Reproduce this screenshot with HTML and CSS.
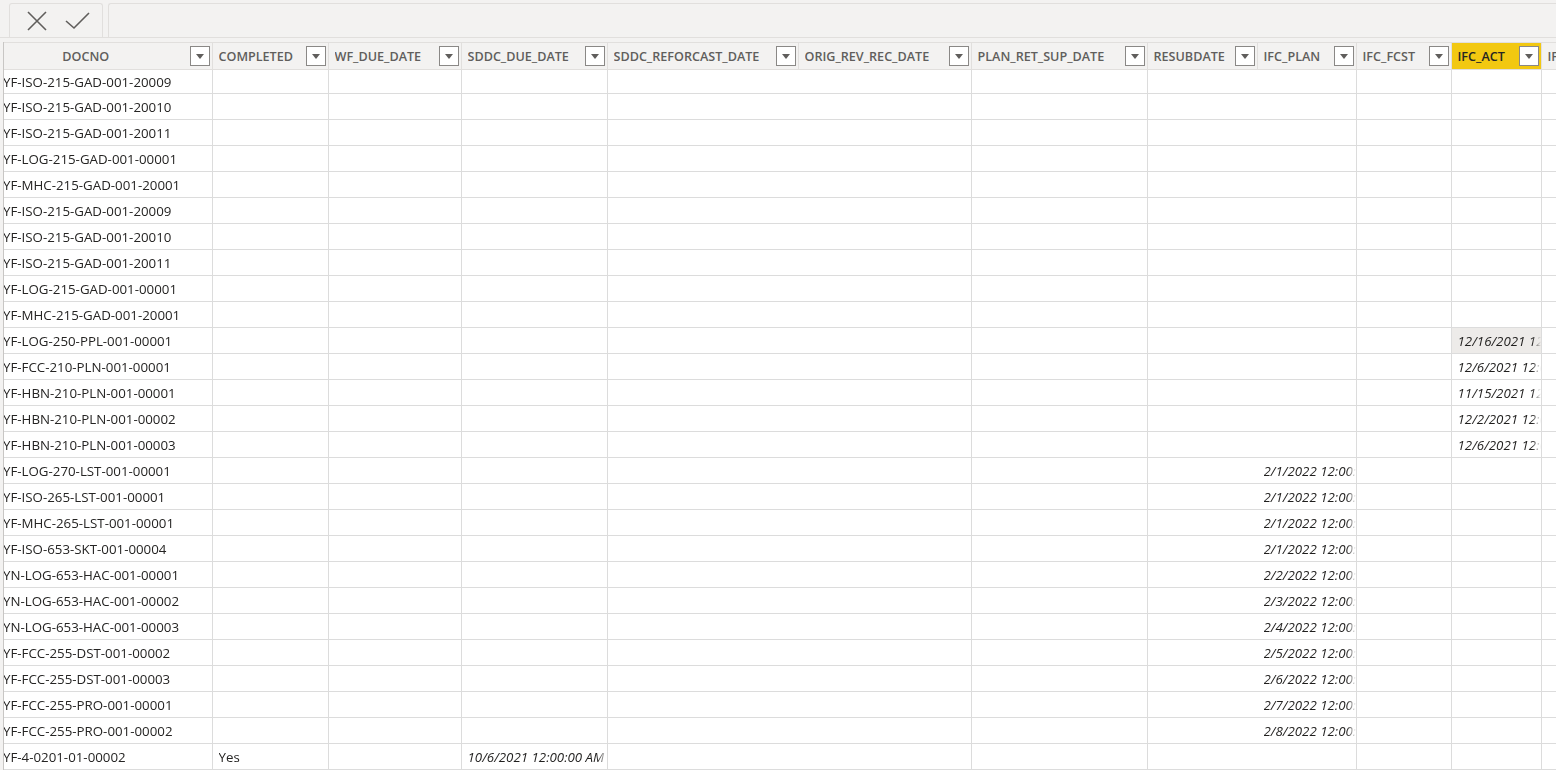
FILE: index.html
```html
<!DOCTYPE html>
<html lang="en">
<head>
    <meta charset="UTF-8">
    <meta name="viewport" content="width=device-width, initial-scale=1.0">
    <title>Data view</title>
    <link rel="stylesheet" href="styles.css">
</head>
<body>
    <div class="toolbar">
        <div class="actions">
            <button class="icon-btn" title="Cancel">
                <svg width="20" height="20" viewBox="0 0 20 20"><path d="M1 1 L19 19 M19 1 L1 19" stroke="#605e5c" stroke-width="1.6" fill="none"/></svg>
            </button>
            <button class="icon-btn" title="Commit">
                <svg width="26" height="18" viewBox="0 0 26 18"><path d="M1 9 L9 16 L24 1" stroke="#605e5c" stroke-width="1.6" fill="none"/></svg>
            </button>
        </div>
        <div class="formula"></div>
    </div>

    <div class="grid-wrap">
        <table id="dataTable">
            <colgroup>
                <col style="width:208px"><col style="width:116px"><col style="width:133px"><col style="width:146px">
                <col style="width:191px"><col style="width:173px"><col style="width:176px"><col style="width:110px">
                <col style="width:99px"><col style="width:95px"><col style="width:90px"><col style="width:120px">
            </colgroup>
            <thead>
                <tr id="headerRow"></tr>
            </thead>
            <tbody id="dataBody">
                <!-- rows are built by the script below -->
            </tbody>
        </table>
    </div>

    <script>
        document.addEventListener('DOMContentLoaded', function() {
            const columns = ['DOCNO', 'COMPLETED', 'WF_DUE_DATE', 'SDDC_DUE_DATE', 'SDDC_REFORCAST_DATE',
                'ORIG_REV_REC_DATE', 'PLAN_RET_SUP_DATE', 'RESUBDATE', 'IFC_PLAN', 'IFC_FCST', 'IFC_ACT', 'IFR_PLAN'];

            // docno, completed, sddc due, ifc plan, ifc act
            const rows = [
                ['YF-ISO-215-GAD-001-20009'],
                ['YF-ISO-215-GAD-001-20010'],
                ['YF-ISO-215-GAD-001-20011'],
                ['YF-LOG-215-GAD-001-00001'],
                ['YF-MHC-215-GAD-001-20001'],
                ['YF-ISO-215-GAD-001-20009'],
                ['YF-ISO-215-GAD-001-20010'],
                ['YF-ISO-215-GAD-001-20011'],
                ['YF-LOG-215-GAD-001-00001'],
                ['YF-MHC-215-GAD-001-20001'],
                ['YF-LOG-250-PPL-001-00001', '', '', '', '12/16/2021 12:00:00 AM'],
                ['YF-FCC-210-PLN-001-00001', '', '', '', '12/6/2021 12:00:00 AM'],
                ['YF-HBN-210-PLN-001-00001', '', '', '', '11/15/2021 12:00:00 AM'],
                ['YF-HBN-210-PLN-001-00002', '', '', '', '12/2/2021 12:00:00 AM'],
                ['YF-HBN-210-PLN-001-00003', '', '', '', '12/6/2021 12:00:00 AM'],
                ['YF-LOG-270-LST-001-00001', '', '', '2/1/2022 12:00:00 AM'],
                ['YF-ISO-265-LST-001-00001', '', '', '2/1/2022 12:00:00 AM'],
                ['YF-MHC-265-LST-001-00001', '', '', '2/1/2022 12:00:00 AM'],
                ['YF-ISO-653-SKT-001-00004', '', '', '2/1/2022 12:00:00 AM'],
                ['YN-LOG-653-HAC-001-00001', '', '', '2/2/2022 12:00:00 AM'],
                ['YN-LOG-653-HAC-001-00002', '', '', '2/3/2022 12:00:00 AM'],
                ['YN-LOG-653-HAC-001-00003', '', '', '2/4/2022 12:00:00 AM'],
                ['YF-FCC-255-DST-001-00002', '', '', '2/5/2022 12:00:00 AM'],
                ['YF-FCC-255-DST-001-00003', '', '', '2/6/2022 12:00:00 AM'],
                ['YF-FCC-255-PRO-001-00001', '', '', '2/7/2022 12:00:00 AM'],
                ['YF-FCC-255-PRO-001-00002', '', '', '2/8/2022 12:00:00 AM'],
                ['YF-4-0201-01-00002', 'Yes', '10/6/2021 12:00:00 AM']
            ];

            const headerRow = document.getElementById('headerRow');
            columns.forEach((name, i) => {
                const th = document.createElement('th');
                if (i === 0) th.className = 'key';
                if (name === 'IFC_ACT') th.className = 'selected';
                th.innerHTML = '<div class="head"><span class="label">' + name + '</span>' +
                    '<span class="drop"><svg width="8" height="5" viewBox="0 0 8 5"><path d="M0 0 H8 L4 5 Z" fill="#605e5c"/></svg></span></div>';
                headerRow.appendChild(th);
            });

            const body = document.getElementById('dataBody');
            rows.forEach((r, index) => {
                const row = body.insertRow();
                if (index === 0) row.className = 'first';
                if (index === rows.length - 1) row.className = 'last';
                for (let c = 0; c < columns.length; c++) {
                    const cell = row.insertCell();
                    let value = '';
                    let italic = false;
                    if (c === 0) value = r[0];
                    if (c === 1) value = r[1] || '';
                    if (c === 3) { value = r[2] || ''; italic = true; }
                    if (c === 8) { value = r[3] || ''; italic = true; }
                    if (c === 10) { value = r[4] || ''; italic = true; }
                    if (c === 0) cell.className = 'key';
                    // these columns draw no divider inside the body
                    if (c === 4 || c === 7) cell.classList.add('open');
                    if (c === 10 && index === 10) cell.classList.add('focus');
                    if (value) {
                        const span = document.createElement('span');
                        span.className = italic ? 'fade date' : 'fade';
                        span.textContent = value;
                        cell.appendChild(span);
                    }
                }
            });
        });
    </script>
</body>
</html>
```

FILE: styles.css
```css
body {
    margin: 0;
    background-color: #f3f2f1;
    font-family: "Open Sans", "Noto Sans", sans-serif;
    color: #252423;
    overflow: hidden;
    height: 770px;
}
.toolbar {
    height: 38px;
    box-sizing: border-box;
    display: flex;
    gap: 5px;
    padding: 3px 0 0 9px;
    border-bottom: 1px solid #e1dfdd;
}
.actions {
    width: 94px;
    box-sizing: border-box;
    border: 1px solid #e1dfdd;
    border-bottom: none;
    border-radius: 3px 3px 0 0;
    display: flex;
    align-items: center;
    padding-left: 17px;
    gap: 18px;
}
.icon-btn {
    background: none;
    border: none;
    padding: 0;
    display: flex;
    cursor: pointer;
}
.formula {
    flex: 1;
    border: 1px solid #e1dfdd;
    border-right: none;
    border-bottom: none;
    border-radius: 3px 0 0 0;
}
.grid-wrap {
    margin-top: 4px;
    margin-left: 3px;
    overflow: hidden;
    border-left: 1px solid #c8c6c4;
}
table {
    border-collapse: collapse;
    table-layout: fixed;
    width: 1657px;
    background-color: #fff;
}
th {
    height: 26px;
    padding: 0;
    background-color: #f3f2f1;
    border-top: 1px solid #e1dfdd;
    border-right: 1px solid #e1dfdd;
    border-bottom: 1px solid #e1dfdd;
    font-size: 12.6px;
    font-weight: 600;
    color: #605e5c;
    text-align: left;
}
th.selected {
    background-color: #f2c811;
    color: #252423;
}
.head {
    display: flex;
    align-items: center;
    padding: 0 2px 0 6px;
}
.label {
    flex: 1;
    white-space: nowrap;
    overflow: hidden;
}
th.key .label {
    text-align: center;
    padding-right: 28px;
}
.drop {
    width: 18px;
    height: 18px;
    border: 1px solid #8a8886;
    background-color: #fff;
    display: flex;
    align-items: center;
    justify-content: center;
    flex: none;
}
td {
    height: 25px;
    padding: 0 0 0 6px;
    border-right: 1px solid #dcdcdc;
    border-bottom: 1px solid #dcdcdc;
    font-size: 13.3px;
    white-space: nowrap;
    overflow: hidden;
}
tr.first td {
    height: 23px;
}
td.key {
    padding-left: 0;
    text-indent: -1px;
}
td.open {
    border-right-color: transparent;
}
td.focus {
    background-color: #edebe9;
}
tr.last td:nth-child(-n+2) {
    border-top: 1px solid #b3b0ad;
}
.fade {
    display: block;
    overflow: hidden;
    white-space: nowrap;
    -webkit-mask-image: linear-gradient(to right, #000 calc(100% - 9px), transparent);
    mask-image: linear-gradient(to right, #000 calc(100% - 9px), transparent);
}
.date {
    font-style: italic;
    color: #201f1e;
}
```
